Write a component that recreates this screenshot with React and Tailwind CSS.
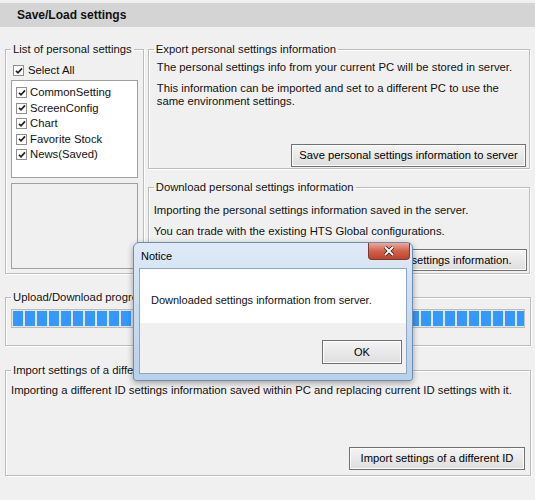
import React from 'react';

const Check = ({ className = '' }) => (
  <span className={`inline-flex items-center justify-center w-[11px] h-[11px] border border-[#8f8f8f] bg-white shrink-0 ${className}`}>
    <svg width="8" height="8" viewBox="0 0 8 8">
      <path d="M1 3.8 L3 5.8 L7 1.4" fill="none" stroke="#222" strokeWidth="1.7" />
    </svg>
  </span>
);

const WinButton = ({ children, className = '' }) => (
  <button
    type="button"
    className={`flex items-center justify-center border border-[#707070] bg-gradient-to-b from-[#f4f4f4] to-[#dedede] shadow-[inset_0_0_0_1px_#fcfcfc] text-[11.2px] text-black ${className}`}
  >
    {children}
  </button>
);

// group box: legend sits on the top border, content box gets an explicit height
const Group = ({ title, className = '', inner = '', children }) => (
  <fieldset className={`border border-[#bcbcbc] shadow-[inset_1px_1px_0_#ffffff,1px_1px_0_#ffffff] min-w-0 ${className}`}>
    <legend className="ml-[5px] px-[2px] leading-[13px]">{title}</legend>
    <div className={`flex flex-col ${inner}`}>{children}</div>
  </fieldset>
);

const items = ['CommonSetting', 'ScreenConfig', 'Chart', 'Favorite Stock', 'News(Saved)'];

export default function App() {
  return (
    <div className="relative w-[535px] h-[500px] bg-[#f0f0f0] text-[11.3px] text-[#111] overflow-hidden" style={{ fontFamily: '"Liberation Sans", Arial, sans-serif' }}>
      <div className="pt-[3px]">
        <div className="h-[24px] bg-[#d4d4d4] pl-[17px] flex items-center font-bold text-[12px]">
          Save/Load settings
        </div>
      </div>

      <div className="px-[5px]">
        {/* top row */}
        <div className="flex items-start gap-[4px] mt-[16px]">
          <Group title="List of personal settings" className="w-[139px]" inner="h-[217px] px-[5px]">
            <div className="flex items-center gap-[4px] h-[13px] mt-[8px] ml-[2px]">
              <Check />
              <span>Select All</span>
            </div>
            <div className="mt-[3px] h-[98px] border border-[#a0a0a0] bg-white pt-[4px] pl-[4px] flex flex-col">
              {items.map((it) => (
                <div key={it} className="flex items-center gap-[3px] h-[15.5px]">
                  <Check />
                  <span>{it}</span>
                </div>
              ))}
            </div>
            <div className="mt-[5px] h-[86px] border border-[#a0a0a0] bg-[#f0f0f0]"></div>
          </Group>

          <div className="w-[383px] flex flex-col">
            <Group title="Export personal settings information" inner="h-[112px] pl-[8px] pr-[3px]">
              <p className="mt-[5px] leading-[13px]">The personal settings info from your current PC will be stored in server.</p>
              <p className="mt-[8px] leading-[13px] pr-[10px]">This information can be imported and set to a different PC to use the same environment settings.</p>
              <div className="flex justify-end mt-auto mb-[1px]">
                <WinButton className="w-[235px] h-[23px]">Save personal settings information to server</WinButton>
              </div>
            </Group>

            <Group title="Download personal settings information" className="mt-[12px]" inner="h-[79px] pl-[5px] pr-[2px]">
              <p className="mt-[10px] leading-[13px]">Importing the personal settings information saved in the server.</p>
              <p className="mt-[8px] leading-[13px]">You can trade with the existing HTS Global configurations.</p>
              <div className="flex justify-end mt-auto mb-[2px]">
                <WinButton className="w-[230px] h-[22px]">Download personal settings information.</WinButton>
              </div>
            </Group>
          </div>
        </div>

        {/* progress */}
        <Group title="Upload/Download progress" className="mt-[17px] w-[526px]" inner="h-[41px] px-[5px]">
          <div className="mt-[5px] h-[19px] border border-[#bcbcbc] bg-[#e6e6e6] flex gap-[2px] pl-[1px] py-[1px] overflow-hidden">
            {Array.from({ length: 43 }).map((_, i) => (
              <div key={i} className="w-[10px] h-full bg-[#3399ff] shrink-0"></div>
            ))}
          </div>
        </Group>

        {/* import */}
        <Group title="Import settings of a different ID" className="mt-[18px] w-[526px]" inner="h-[98px] pl-[5px] pr-[5px]">
          <p className="mt-[7px] leading-[13px]">Importing a different ID settings information saved within PC and replacing current ID settings with it.</p>
          <div className="flex justify-end mt-auto mb-[5px]">
            <WinButton className="w-[176px] h-[23px]">Import settings of a different ID</WinButton>
          </div>
        </Group>
      </div>

      {/* Notice dialog */}
      <div className="absolute left-[133px] top-[242px] w-[280px] h-[139px] rounded-t-[6px] rounded-b-[3px] border border-[#6e8bb0] bg-gradient-to-b from-[#dfeaf7] via-[#c9dcf1] to-[#b9d0ea] shadow-[0_2px_6px_rgba(0,0,0,0.35)] flex flex-col px-[5px] pb-[6px] text-[11px]">
        <div className="h-[25px] flex items-center justify-between">
          <span className="ml-[2px] mt-[1px] text-black">Notice</span>
          <div className="self-start w-[42px] h-[17px] rounded-b-[4px] border border-[#7a3a2e] border-t-0 bg-gradient-to-b from-[#e9a99b] via-[#d1624b] to-[#c0412a] flex items-center justify-center -mr-[3px]">
            <svg width="12" height="10" viewBox="0 0 12 10">
              <path d="M2 1 L10 9 M10 1 L2 9" stroke="#3a1a14" strokeWidth="3.4" />
              <path d="M2 1 L10 9 M10 1 L2 9" stroke="#ffffff" strokeWidth="1.8" />
            </svg>
          </div>
        </div>
        <div className="flex-1 border border-[#8ea6c4] flex flex-col">
          <div className="h-[54px] bg-white pl-[11px] pt-[25px] leading-[13px]">
            Downloaded settings information from server.
          </div>
          <div className="flex-1 bg-[#f0f0f0] flex justify-end items-start pr-[4px] pt-[17px]">
            <WinButton className="w-[80px] h-[24px] text-[11px]">OK</WinButton>
          </div>
        </div>
      </div>
    </div>
  );
}
